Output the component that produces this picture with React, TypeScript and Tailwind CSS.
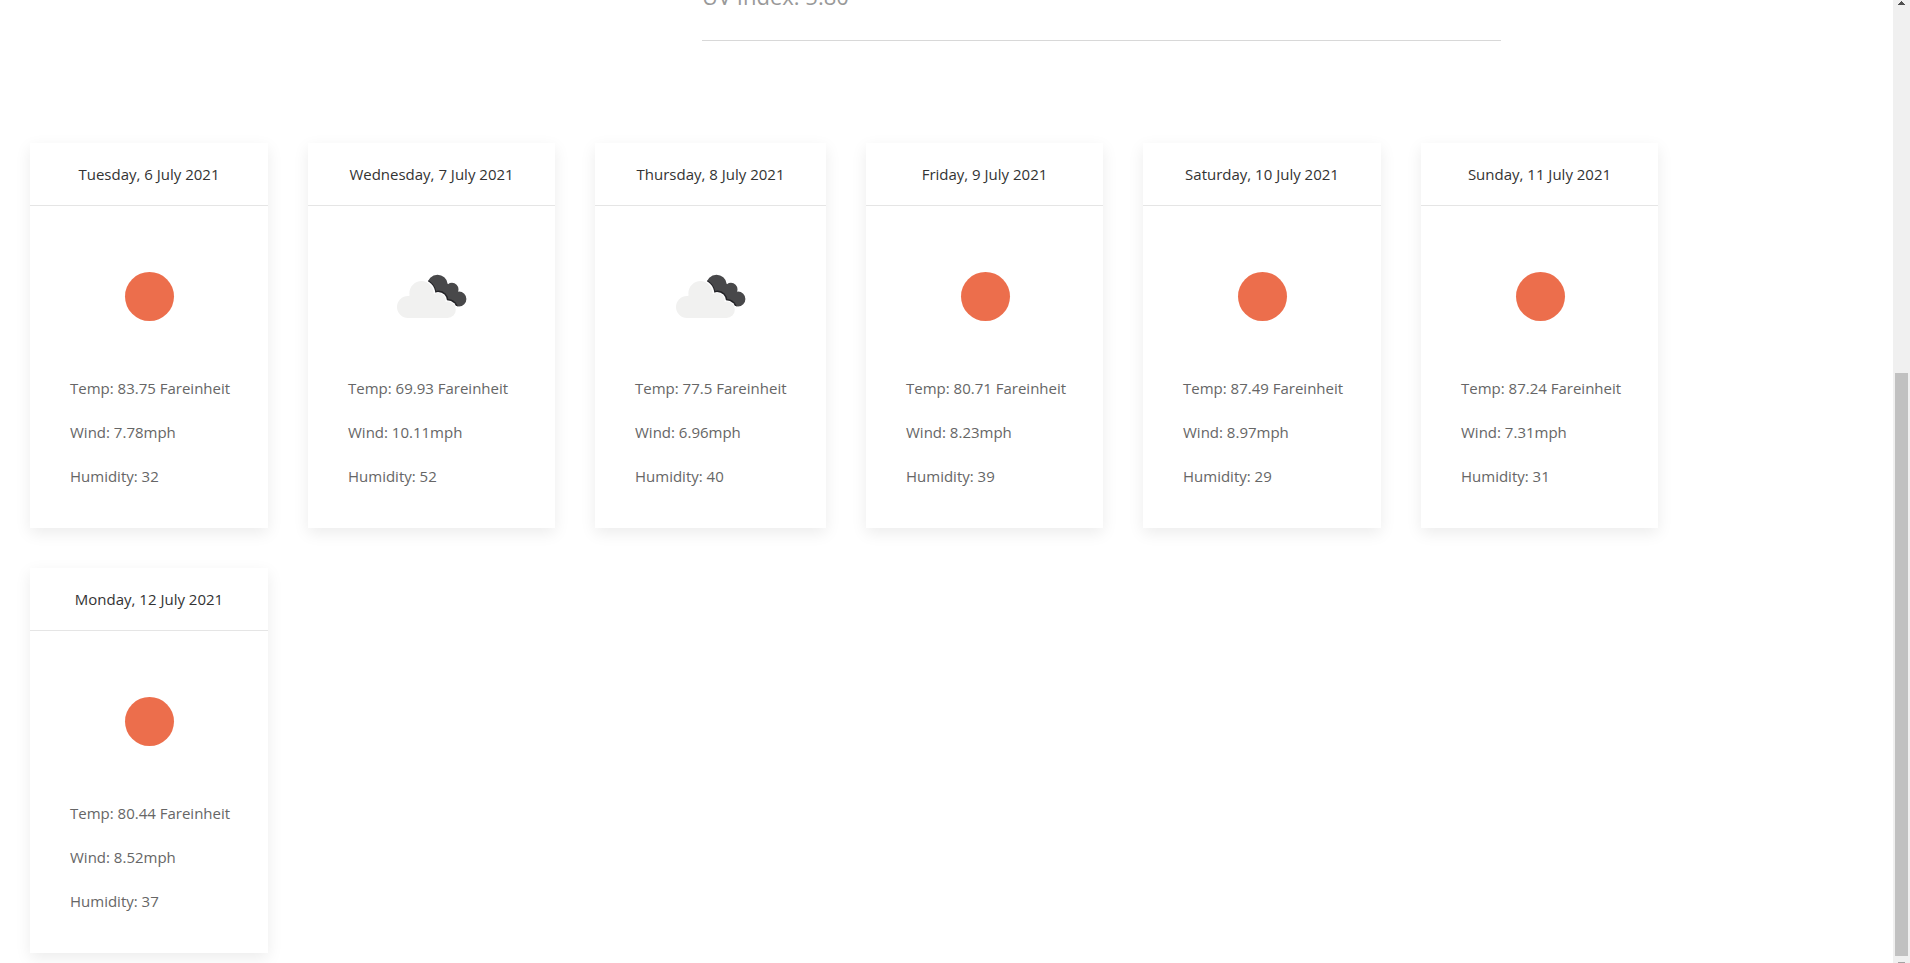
import { useId } from "react";

type Sky = "clear" | "clouds";

interface Day {
  date: string;
  sky: Sky;
  temp: string;
  wind: string;
  humidity: number;
  width: string;
}

const days: Day[] = [
  { date: "Tuesday, 6 July 2021", sky: "clear", temp: "83.75", wind: "7.78", humidity: 32, width: "w-[238px]" },
  { date: "Wednesday, 7 July 2021", sky: "clouds", temp: "69.93", wind: "10.11", humidity: 52, width: "w-[247px]" },
  { date: "Thursday, 8 July 2021", sky: "clouds", temp: "77.5", wind: "6.96", humidity: 40, width: "w-[231px]" },
  { date: "Friday, 9 July 2021", sky: "clear", temp: "80.71", wind: "8.23", humidity: 39, width: "w-[237px]" },
  { date: "Saturday, 10 July 2021", sky: "clear", temp: "87.49", wind: "8.97", humidity: 29, width: "w-[238px]" },
  { date: "Sunday, 11 July 2021", sky: "clear", temp: "87.24", wind: "7.31", humidity: 31, width: "w-[237px]" },
  { date: "Monday, 12 July 2021", sky: "clear", temp: "80.44", wind: "8.52", humidity: 37, width: "w-[238px]" },
];

function SunIcon() {
  return (
    <svg viewBox="0 0 100 100" className="h-[100px] w-[100px]" role="img" aria-label="Clear sky">
      <circle cx="50.5" cy="50.5" r="24.5" fill="#ec6e4c" />
    </svg>
  );
}

function CloudsIcon() {
  const clip = useId();
  return (
    <svg viewBox="0 0 100 100" className="h-[100px] w-[100px]" role="img" aria-label="Broken clouds">
      <clipPath id={clip}>
        <circle cx="55.5" cy="39" r="10.2" />
        <circle cx="70" cy="43.3" r="6.5" />
        <circle cx="77" cy="53" r="7.4" />
        <path d="M50 46L64 36L74 47L74 60L56 58Z" />
      </clipPath>
      <g clipPath={`url(#${clip})`}>
        <rect x="40" y="25" width="50" height="40" fill="#48484a" />
        <g fill="#222226">
          <circle cx="39.5" cy="47.5" r="14.7" />
          <circle cx="56.5" cy="54.5" r="9.9" />
          <circle cx="65.5" cy="64" r="11" />
        </g>
      </g>
      <g fill="#ffffff">
        <circle cx="39.5" cy="47.5" r="13.7" />
        <circle cx="56" cy="55" r="9.1" />
        <circle cx="65" cy="64.5" r="10.2" />
      </g>
      <g fill="#f1f1f0">
        <circle cx="39.5" cy="47.2" r="12.1" />
        <circle cx="56" cy="54.8" r="7.7" />
        <circle cx="26" cy="61" r="11" />
        <circle cx="65.5" cy="63.7" r="8.3" />
        <path d="M26 50.5L40 42L56 50L65.5 60V72H26Z" />
      </g>
    </svg>
  );
}

function DayCard({ day }: { day: Day }) {
  return (
    <article
      className={`${day.width} bg-white whitespace-nowrap shadow-[0_5px_15px_rgba(0,0,0,0.08)]`}
    >
      <h3 className="border-b border-[#e5e5e5] py-5 text-center text-[#333333] leading-[22px]">
        {day.date}
      </h3>
      <div className="flex flex-col p-10">
        <div className="mb-[30px] flex justify-center">
          {day.sky === "clear" ? <SunIcon /> : <CloudsIcon />}
        </div>
        <div className="flex flex-col gap-5">
          <p>Temp: {day.temp} Fareinheit</p>
          <p>Wind: {day.wind}mph</p>
          <p>Humidity: {day.humidity}</p>
        </div>
      </div>
    </article>
  );
}

function ScrollTrack() {
  return (
    <div className="flex w-[17px] shrink-0 flex-col items-center bg-[#f0f0f0]" aria-hidden="true">
      <svg viewBox="0 0 7 4" className="mt-px h-1 w-[7px]" shapeRendering="crispEdges">
        <path d="M3 0h1v1h1v1h1v1h1v1H0V3h1V2h1V1h1z" fill="#505050" />
      </svg>
      <div className="grow-[368]" />
      <div className="w-[13px] grow-[583] bg-[#c1c1c1]" />
      <div className="h-1.5" />
      <div className="h-px w-[7px] bg-[#a3a3a3]" />
    </div>
  );
}

export default function App() {
  return (
    <div className="flex h-screen overflow-hidden bg-white font-['Open_Sans','Noto_Sans',sans-serif] text-[15px] leading-6 text-[#666666]">
      <main className="min-w-0 flex-1">
        <section className="grid grid-cols-[702fr_799fr_392fr]">
          <div className="col-start-2 flex h-[41px] flex-col justify-start overflow-hidden border-b border-[#d8d8d8]">
            <p className="-mt-5 text-[22px] leading-8 text-[#999999]">UV Index: 5.80</p>
          </div>
        </section>
        <section className="flex flex-wrap gap-10 px-[30px] pt-[102px]">
          {days.map((day) => (
            <DayCard key={day.date} day={day} />
          ))}
        </section>
      </main>
      <ScrollTrack />
    </div>
  );
}
